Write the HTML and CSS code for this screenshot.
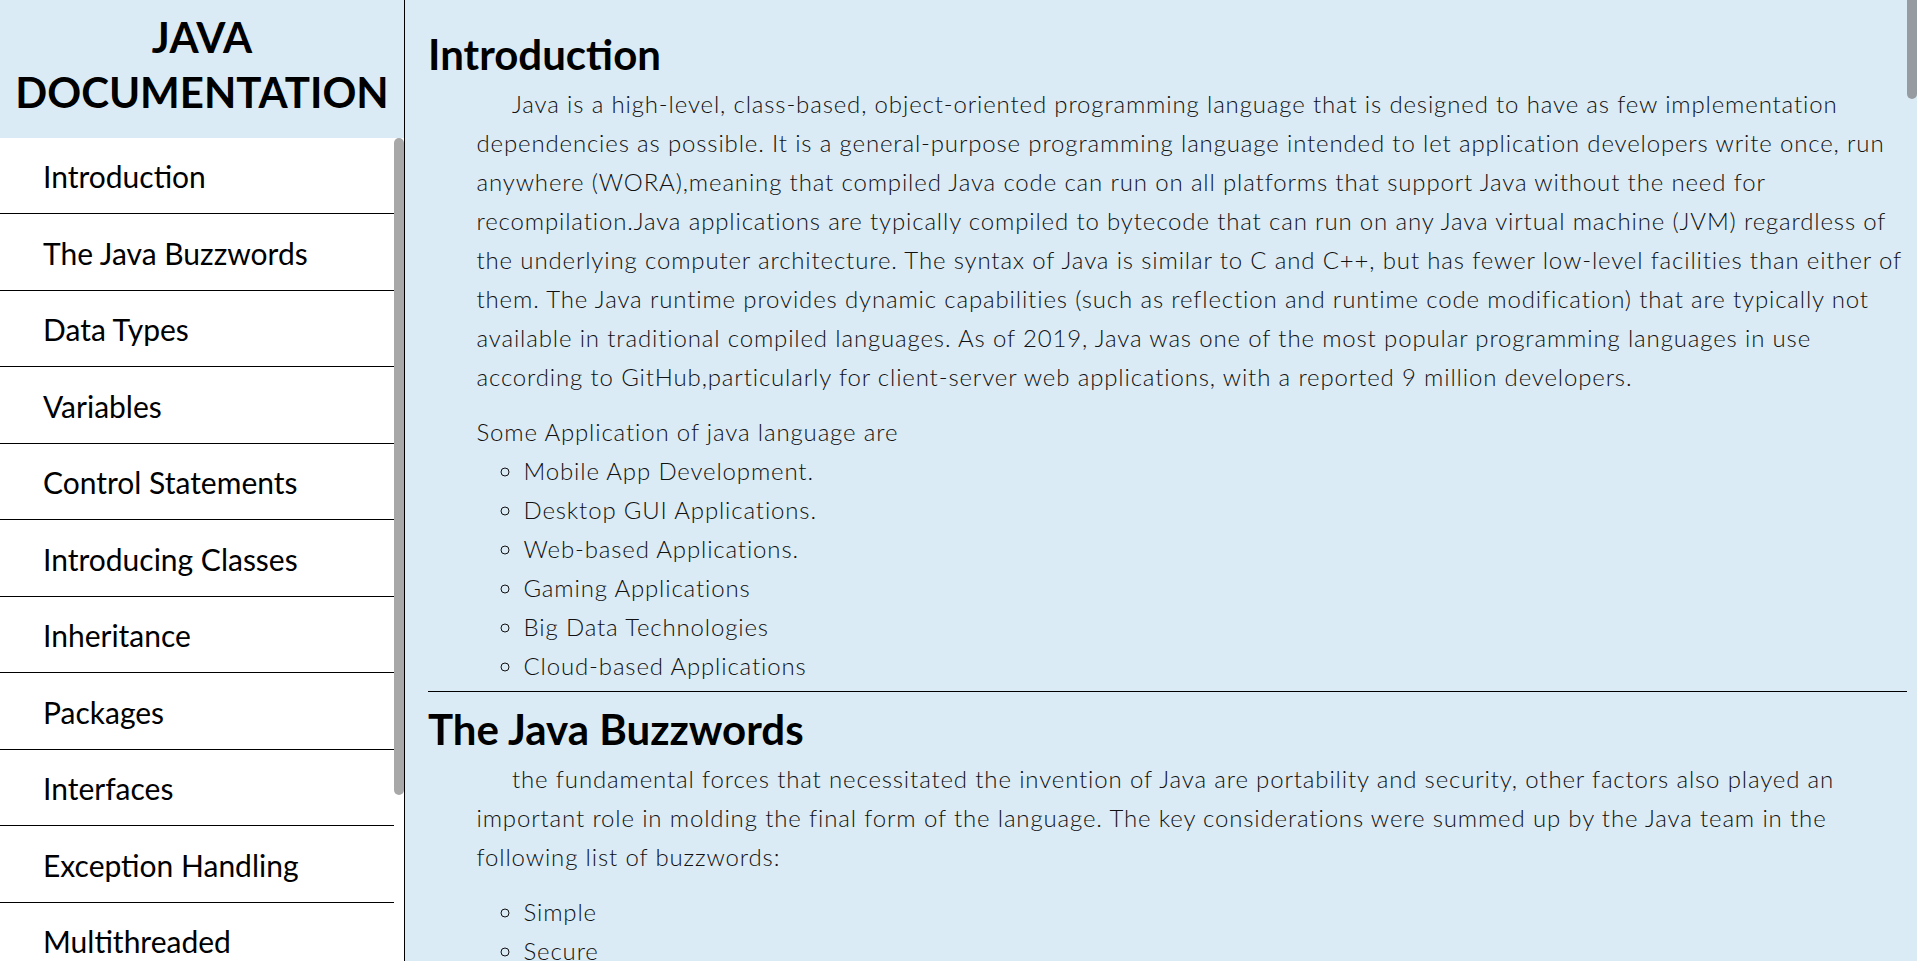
FILE: index.html
```html
<!DOCTYPE html>
<html lang="en">
<head>
<meta charset="utf-8">
<title>Java Documentation</title>
<link rel="stylesheet" href="styles.css">
</head>
<body>
<div class="page">
  <nav id="navbar" class="navbar">
    <header class="nav-header">JAVA DOCUMENTATION</header>
    <div class="nav-body">
      <ul class="nav-list">
        <li><a class="nav-link" href="#Introduction">Introduction</a></li>
        <li><a class="nav-link" href="#The_Java_Buzzwords">The Java Buzzwords</a></li>
        <li><a class="nav-link" href="#Data_Types">Data Types</a></li>
        <li><a class="nav-link" href="#Variables">Variables</a></li>
        <li><a class="nav-link" href="#Control_Statements">Control Statements</a></li>
        <li><a class="nav-link" href="#Introducing_Classes">Introducing Classes</a></li>
        <li><a class="nav-link" href="#Inheritance">Inheritance</a></li>
        <li><a class="nav-link" href="#Packages">Packages</a></li>
        <li><a class="nav-link" href="#Interfaces">Interfaces</a></li>
        <li><a class="nav-link" href="#Exception_Handling">Exception Handling</a></li>
        <li><a class="nav-link" href="#Multithreaded_Programming">Multithreaded Programming</a></li>
        <li><a class="nav-link" href="#String_Handling">String Handling</a></li>
        <li><a class="nav-link" href="#Reference">Reference</a></li>
      </ul>
      <div class="scroll-track nav-track" aria-hidden="true"><div class="scroll-thumb nav-thumb"></div></div>
    </div>
  </nav>

  <main id="main-doc" class="main-doc">
    <section class="main-section" id="Introduction">
      <header class="section-title">Introduction</header>
      <p class="text">Java is a high-level, class-based, object-oriented programming language that is designed to have as few implementation dependencies as possible. It is a general-purpose programming language intended to let application developers write once, run anywhere (WORA),meaning that compiled Java code can run on all platforms that support Java without the need for recompilation.Java applications are typically compiled to bytecode that can run on any Java virtual machine (JVM) regardless of the underlying computer architecture. The syntax of Java is similar to C and C++, but has fewer low-level facilities than either of them. The Java runtime provides dynamic capabilities (such as reflection and runtime code modification) that are typically not available in traditional compiled languages. As of 2019, Java was one of the most popular programming languages in use according to GitHub,particularly for client-server web applications, with a reported 9 million developers.</p>
      <p class="lead">Some Application of java language are</p>
      <ul class="items">
        <li>Mobile App Development.</li>
        <li>Desktop GUI Applications.</li>
        <li>Web-based Applications.</li>
        <li>Gaming Applications</li>
        <li>Big Data Technologies</li>
        <li>Cloud-based Applications</li>
      </ul>
    </section>

    <section class="main-section" id="The_Java_Buzzwords">
      <header class="section-title">The Java Buzzwords</header>
      <p class="text">the fundamental forces that necessitated the invention of Java are portability and security, other factors also played an important role in molding the final form of the language. The key considerations were summed up by the Java team in the following list of buzzwords:</p>
      <ul class="items">
        <li>Simple</li>
        <li>Secure</li>
        <li>Portable</li>
        <li>Object-oriented</li>
        <li>Robust</li>
        <li>Multithreaded</li>
        <li>Architecture-neutral</li>
        <li>Interpreted</li>
        <li>High performance</li>
        <li>Distributed</li>
        <li>Dynamic</li>
      </ul>
    </section>

    <section class="main-section" id="Data_Types">
      <header class="section-title">Data Types</header>
      <p class="text">Java is a strongly typed language. Every variable has a type, every expression has a type, and every type is strictly defined. All assignments, whether explicit or via parameter passing in method calls, are checked for type compatibility. Java defines eight primitive types of data, which can be put in four groups:</p>
      <ul class="items">
        <li>Integers: byte, short, int, and long, which are for whole-valued signed numbers.</li>
        <li>Floating-point numbers: float and double, which represent numbers with fractional precision.</li>
        <li>Characters: char, which represents symbols in a character set, like letters and numbers.</li>
        <li>Boolean: boolean, which is a special type for representing true/false values.</li>
      </ul>
    </section>

    <section class="main-section" id="Variables">
      <header class="section-title">Variables</header>
      <p class="text">The variable is the basic unit of storage in a Java program. A variable is defined by the combination of an identifier, a type, and an optional initializer. In addition, all variables have a scope, which defines their visibility, and a lifetime. In Java, all variables must be declared before they can be used.</p>
    </section>

    <section class="main-section" id="Control_Statements">
      <header class="section-title">Control Statements</header>
      <p class="text">A programming language uses control statements to cause the flow of execution to advance and branch based on changes to the state of a program. Java's program control statements can be put into the following categories: selection, iteration, and jump.</p>
      <ul class="items">
        <li>Selection statements: if and switch.</li>
        <li>Iteration statements: for, while, and do-while.</li>
        <li>Jump statements: break, continue, and return.</li>
      </ul>
    </section>

    <section class="main-section" id="Introducing_Classes">
      <header class="section-title">Introducing Classes</header>
      <p class="text">The class is at the core of Java. It is the logical construct upon which the entire Java language is built because it defines the shape and nature of an object. As such, the class forms the basis for object-oriented programming in Java. A class defines a new data type. Once defined, this new type can be used to create objects of that type.</p>
    </section>

    <section class="main-section" id="Inheritance">
      <header class="section-title">Inheritance</header>
      <p class="text">Inheritance is one of the cornerstones of object-oriented programming because it allows the creation of hierarchical classifications. Using inheritance, you can create a general class that defines traits common to a set of related items.</p>
    </section>

    <section class="main-section" id="Packages">
      <header class="section-title">Packages</header>
      <p class="text">Packages are containers for classes. They are used to keep the class name space compartmentalized. Packages are stored in a hierarchical manner and are explicitly imported into new class definitions.</p>
    </section>

    <section class="main-section" id="Interfaces">
      <header class="section-title">Interfaces</header>
      <p class="text">Using the keyword interface, you can fully abstract a class' interface from its implementation. That is, using interface, you can specify what a class must do, but not how it does it.</p>
    </section>

    <section class="main-section" id="Exception_Handling">
      <header class="section-title">Exception Handling</header>
      <p class="text">An exception is an abnormal condition that arises in a code sequence at run time. Java exception handling is managed via five keywords: try, catch, throw, throws, and finally.</p>
    </section>

    <section class="main-section" id="Multithreaded_Programming">
      <header class="section-title">Multithreaded Programming</header>
      <p class="text">Java provides built-in support for multithreaded programming. A multithreaded program contains two or more parts that can run concurrently.</p>
    </section>

    <section class="main-section" id="String_Handling">
      <header class="section-title">String Handling</header>
      <p class="text">In Java a string is a sequence of characters. Java implements strings as objects of type String.</p>
    </section>

    <section class="main-section" id="Reference">
      <header class="section-title">Reference</header>
      <p class="text">All the documentation in this page is taken from Java: The Complete Reference and Wikipedia.</p>
    </section>
  </main>

  <div class="scroll-track page-track" aria-hidden="true"><div class="scroll-thumb page-thumb"></div></div>
</div>
</body>
</html>
```

FILE: styles.css
```css
html, body {
  margin: 0;
  padding: 0;
  height: 100%;
}

body {
  font-family: Lato, "Open Sans", "Liberation Sans", sans-serif;
  color: #000;
  background: #dbebf6;
  overflow: hidden;
}

.page {
  display: grid;
  grid-template-columns: 405px 1fr 10px;
  height: 100vh;
}

/* ---------- scrollbars ---------- */
.scroll-track {
  min-height: 0;
}

.scroll-thumb {
  width: 10px;
  border-radius: 5px;
}

/* ---------- sidebar ---------- */
.navbar {
  display: flex;
  flex-direction: column;
  min-height: 0;
  border-right: 1px solid #000;
  background: #dbebf6;
}

.nav-header {
  flex: none;
  padding: 10px 0 18.5px;
  font-size: 42px;
  line-height: 54.5px;
  font-weight: 700;
  text-align: center;
}

.nav-body {
  flex: 1;
  min-height: 0;
  display: grid;
  grid-template-columns: 1fr 10px;
  background: #fff;
}

.nav-list {
  min-height: 0;
  margin: 0;
  padding: 0;
  list-style: none;
  overflow: hidden;
}

.nav-track {
  background: #fff;
}

.nav-thumb {
  height: 657px;
  background: #a8a8a8;
}

.nav-link {
  display: block;
  padding: 18.5px 0 17px 43px;
  font-size: 30px;
  line-height: 40px;
  color: #000;
  text-decoration: none;
  border-bottom: 1px solid #000;
}

/* ---------- main ---------- */
.main-doc {
  min-width: 0;
  min-height: 0;
  overflow: hidden;
  padding: 16.5px 0 40px 23px;
}

.page-track {
  background: #dbebf6;
}

.page-thumb {
  height: 99px;
  border-radius: 0 0 5px 5px;
  background: #969ba1;
}

.main-section {
  padding-bottom: 6px;
  border-bottom: 1px solid #000;
}

.section-title {
  margin: 9px 0 1px;
  font-size: 42px;
  line-height: 57px;
  font-weight: 700;
}

.text,
.lead,
.items {
  font-size: 24px;
  line-height: 39px;
  font-weight: 300;
  letter-spacing: 0.85px;
  color: #111;
}

.text {
  margin: 0 0 16px 48.5px;
  text-indent: 35.5px;
}

.lead {
  margin: 0 0 0 48.5px;
}

.items {
  margin: 0 0 0 48.5px;
  padding-left: 47px;
  list-style: circle;
}
```
